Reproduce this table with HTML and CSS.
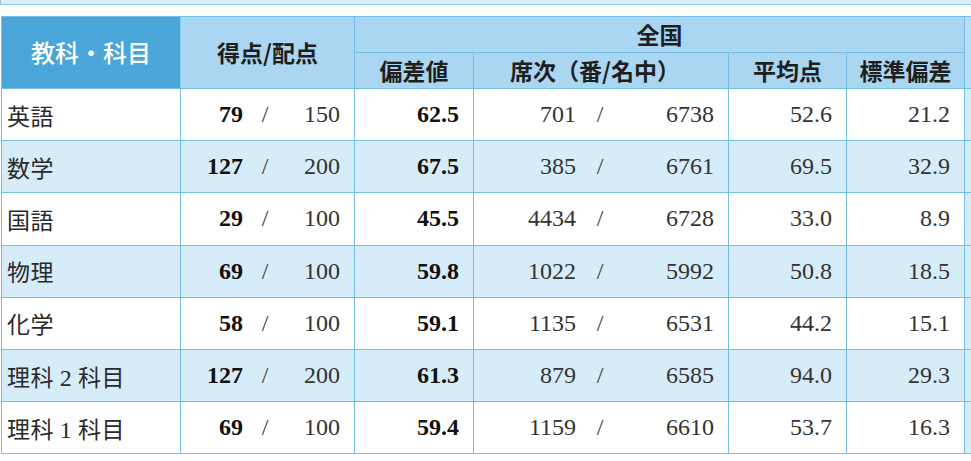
FILE: index.html
```html
<!DOCTYPE html>
<html lang="ja">
<head>
<meta charset="utf-8">
<title>成績表</title>
<link rel="stylesheet" href="styles.css">
</head>
<body>
<div class="page">
  <div class="top-strip"></div>
  <div class="table-wrap">
    <table class="scores">
      <colgroup>
        <col class="w1">
        <col class="w2">
        <col class="w3">
        <col class="w4">
        <col class="w5">
        <col class="w6">
        <col class="w7">
      </colgroup>
      <thead>
        <tr class="head1">
          <th class="subject-head" rowspan="2">教科・科目</th>
          <th rowspan="2">得点/配点</th>
          <th colspan="4">全国</th>
          <th class="extra" rowspan="2"></th>
        </tr>
        <tr class="head2">
          <th>偏差値</th>
          <th class="rank-head">席次（番/名中）</th>
          <th>平均点</th>
          <th>標準偏差</th>
        </tr>
      </thead>
      <tbody>
        <tr>
          <td class="subj">英語</td>
          <td class="num"><div class="pair pts"><span class="a b">79</span><span class="sep">/</span><span class="t">150</span></div></td>
          <td class="num b">62.5</td>
          <td class="num"><div class="pair rank"><span class="a">701</span><span class="sep">/</span><span class="t">6738</span></div></td>
          <td class="num">52.6</td>
          <td class="num">21.2</td>
          <td class="extra"></td>
        </tr>
        <tr class="alt">
          <td class="subj">数学</td>
          <td class="num"><div class="pair pts"><span class="a b">127</span><span class="sep">/</span><span class="t">200</span></div></td>
          <td class="num b">67.5</td>
          <td class="num"><div class="pair rank"><span class="a">385</span><span class="sep">/</span><span class="t">6761</span></div></td>
          <td class="num">69.5</td>
          <td class="num">32.9</td>
          <td class="extra"></td>
        </tr>
        <tr>
          <td class="subj">国語</td>
          <td class="num"><div class="pair pts"><span class="a b">29</span><span class="sep">/</span><span class="t">100</span></div></td>
          <td class="num b">45.5</td>
          <td class="num"><div class="pair rank"><span class="a">4434</span><span class="sep">/</span><span class="t">6728</span></div></td>
          <td class="num">33.0</td>
          <td class="num">8.9</td>
          <td class="extra"></td>
        </tr>
        <tr class="alt">
          <td class="subj">物理</td>
          <td class="num"><div class="pair pts"><span class="a b">69</span><span class="sep">/</span><span class="t">100</span></div></td>
          <td class="num b">59.8</td>
          <td class="num"><div class="pair rank"><span class="a">1022</span><span class="sep">/</span><span class="t">5992</span></div></td>
          <td class="num">50.8</td>
          <td class="num">18.5</td>
          <td class="extra"></td>
        </tr>
        <tr>
          <td class="subj">化学</td>
          <td class="num"><div class="pair pts"><span class="a b">58</span><span class="sep">/</span><span class="t">100</span></div></td>
          <td class="num b">59.1</td>
          <td class="num"><div class="pair rank"><span class="a">1135</span><span class="sep">/</span><span class="t">6531</span></div></td>
          <td class="num">44.2</td>
          <td class="num">15.1</td>
          <td class="extra"></td>
        </tr>
        <tr class="alt">
          <td class="subj">理科<span class="fw">2</span>科目</td>
          <td class="num"><div class="pair pts"><span class="a b">127</span><span class="sep">/</span><span class="t">200</span></div></td>
          <td class="num b">61.3</td>
          <td class="num"><div class="pair rank"><span class="a">879</span><span class="sep">/</span><span class="t">6585</span></div></td>
          <td class="num">94.0</td>
          <td class="num">29.3</td>
          <td class="extra"></td>
        </tr>
        <tr>
          <td class="subj">理科<span class="fw">1</span>科目</td>
          <td class="num"><div class="pair pts"><span class="a b">69</span><span class="sep">/</span><span class="t">100</span></div></td>
          <td class="num b">59.4</td>
          <td class="num"><div class="pair rank"><span class="a">1159</span><span class="sep">/</span><span class="t">6610</span></div></td>
          <td class="num">53.7</td>
          <td class="num">16.3</td>
          <td class="extra"></td>
        </tr>
      </tbody>
    </table>
  </div>
</div>
</body>
</html>
```

FILE: styles.css
```css
html, body {
  margin: 0;
  padding: 0;
  background: #ffffff;
}

.page {
  width: 971px;
  height: 461px;
  overflow: hidden;
}

.top-strip {
  height: 4px;
  background: #d9eef9;
  border-left: 1px solid #8fcbea;
  border-bottom: 1px solid #8fcbea;
}

.table-wrap {
  margin-top: 11px;
  padding-left: 1px;
  width: 1040px;
}

.scores {
  border-collapse: separate;
  border-spacing: 0;
  table-layout: fixed;
  width: 1016px;
  border-top: 1px solid #74bfe6;
  border-left: 1px solid #74bfe6;
  font-family: "Noto Sans CJK JP", "Noto Sans", sans-serif;
  color: #222;
}

.scores th,
.scores td {
  box-sizing: border-box;
  border-right: 1px solid #74bfe6;
  border-bottom: 1px solid #74bfe6;
  padding: 0;
  overflow: hidden;
  white-space: nowrap;
}

.w1 { width: 179px; }
.w2 { width: 174px; }
.w3 { width: 119px; }
.w4 { width: 255px; }
.w5 { width: 118px; }
.w6 { width: 118px; }
.w7 { width: 52px; }

.scores th {
  background: #aad6f1;
  font-size: 23px;
  font-weight: 700;
  color: #1e1e1e;
  text-align: center;
  line-height: 1;
}

.head1 th, .head2 th {
  height: 36px;
}

.rank-head {
  padding-right: 12px !important;
}

.scores th.subject-head {
  background: #4aa6d9;
  color: #ffffff;
  font-weight: 500;
  font-size: 24px;
  border-right-color: #8ccbed;
  padding-bottom: 2px;
}

.scores th.extra,
.scores td.extra {
  background: #d6ecf9;
}

.scores th.extra {
  background: #b7dcf3;
}

.scores tbody tr {
  height: 52.2px;
}

.scores tbody tr.alt td {
  background: #d7ecf9;
}

.subj {
  font-size: 23px;
  font-weight: 400;
  padding-left: 5px !important;
  color: #2a2a2a;
  letter-spacing: 0.5px;
}

.fw {
  display: inline-block;
  width: 1em;
  text-align: center;
  font-family: "Liberation Serif", serif;
  font-size: 24px;
}

.num {
  font-family: "Liberation Serif", "Noto Sans CJK JP", serif;
  font-size: 24px;
  text-align: right;
  padding-right: 14px !important;
  color: #333;
}

.num.b,
.b {
  font-weight: 700;
  color: #111;
}

.pair {
  display: flex;
  justify-content: flex-end;
  align-items: baseline;
}

.pair .a {
  text-align: right;
}

.pair .sep {
  text-align: center;
  font-weight: 400;
  color: #444;
}

.pair .t {
  text-align: right;
}

.pts .a { width: 50px; }
.pts .sep { width: 44px; }
.pts .t { width: 53px; }

.rank .a { width: 70px; }
.rank .sep { width: 48px; }
.rank .t { width: 90px; }
```
